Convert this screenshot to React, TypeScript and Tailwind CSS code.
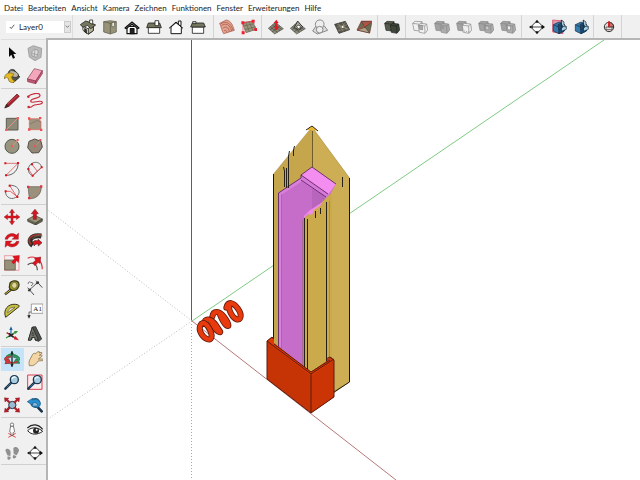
import type { ReactNode } from 'react';

const MENU = [
  'Datei',
  'Bearbeiten',
  'Ansicht',
  'Kamera',
  'Zeichnen',
  'Funktionen',
  'Fenster',
  'Erweiterungen',
  'Hilfe',
];

const RED = '#d9141e';
const STONE = '#8d8b7a';

type Tool = { label: string; icon: ReactNode; active?: boolean };

// All icons are drawn on a 48 unit grid.
function Solids({ tone, variant = 0 }: { tone: string; variant?: number }) {
  const edge = tone === 'dark' ? '#20231f' : '#858585';
  const back = tone === 'dark' ? '#555b4b' : '#a2a2a2';
  const front = tone === 'dark' ? '#3f473b' : '#adadad';
  return (
    <g stroke={edge} strokeWidth="2" strokeLinejoin="round">
      <path
        d="M2 13l7-6 21 1 3 19-8 9-19-2z"
        fill={variant === 1 ? '#f0f0f0' : back}
      />
      <path d="M2 13l22 3 6-8M24 16v19" fill="none" />
      <path
        d="M19 19l6-6 19 2 3 18-8 10-17-3z"
        fill={variant === 1 || variant === 3 ? '#f0f0f0' : front}
      />
      <path d="M19 19l19 2 6-6M38 21l1 21" fill="none" />
      {variant === 1 && <path d="M20 18l11 1 1 13-9-1z" fill="#aaa" />}
      {variant === 2 && <path d="M17 17l12 2 2 12-9-1z" fill="#999" stroke="none" />}
      {variant === 3 && <path d="M24 36l18 3" strokeDasharray="3 3" />}
      {variant === 4 && <path d="M22 21l10 1 1 11-9-1z" fill="#ccc" />}
      {variant === 5 && <path d="M22 20l9 1 1 12-9-1z" fill="#eee" />}
    </g>
  );
}

function Terrain({ fill = STONE, lines = '#30332c' }: { fill?: string; lines?: string }) {
  return (
    <g stroke={lines} strokeWidth="1.5" strokeLinejoin="round">
      <path d="M1 28L22 10l24 19-26 16z" fill={fill} />
      <path d="M7 24l22 16M13 18l23 17M18 14l23 17M6 33l22-18M12 39l23-18" fill="none" />
    </g>
  );
}

const styleCube = (
  <g stroke="#152c43" strokeWidth="2" strokeLinejoin="round">
    <path d="M7 17l17-8 16 8v19l-16 8-17-8z" fill="#3679ad" />
    <path d="M7 17l17 8v19M24 25l16-8" fill="none" />
    <path d="M24 25l16-8v19l-16 8z" fill="#1d5585" />
    <path d="M31 3l8 6v9l7 4v9l-15 6z" fill="#a8cfe2" />
    <path d="M21 17l9-5 6 12-12 8z" fill="#264e70" />
    <path d="M31 3v34M25 20l21 4" fill="none" />
  </g>
);

const sectionPlane = (
  <g fill="none" stroke="#222" strokeWidth="2.5">
    <circle cx="24" cy="24" r="14" fill="#fff" />
    <path d="M3 24h40" />
    <path
      d="M24 2l-6 8h12zM24 46l-6-8h12zM48 24l-9-7v14zM0 24l8-5v10z"
      fill="#111"
      stroke="none"
    />
  </g>
);

const TOP_GROUPS: Tool[][] = [
  [
    {
      label: 'Iso',
      icon: (
        <g stroke="#25271f" strokeWidth="2.5" strokeLinejoin="round">
          <path d="M8 21l17 9 15-11v16L25 46 9 34z" fill="#fff" />
          <path d="M25 28l15-8v15L25 45z" fill="#b8b69d" />
          <path d="M1 17L17 6l13 4 17 8-15 11-9-10L9 25z" fill="#77785f" />
          <path d="M29 3h9v13l-9-4z" fill="#fff" />
          <path d="M14 28v11l6 4V32z" fill="#333" />
        </g>
      ),
    },
    {
      label: 'Oben',
      icon: (
        <g stroke="#55543e" strokeWidth="2">
          <path d="M5 8l20-3 18 3v31l-18 6-20-6z" fill="#96937a" />
          <path d="M25 12v32M5 8l20 5 18-5" fill="none" />
          <path d="M30 11l7-2v13l-7 2z" fill="#fff" />
        </g>
      ),
    },
    {
      label: 'Vorderseite',
      icon: (
        <g stroke="#111" strokeWidth="3.5" strokeLinejoin="round">
          <path d="M9 22h30v22H9z" fill="#fff" />
          <path d="M3 27L24 9l21 18-4 2-17-14L7 29z" fill="#eee" />
          <path d="M19 29h11v15H19z" fill="#222" />
        </g>
      ),
    },
    {
      label: 'Rechts',
      icon: (
        <g stroke="#222" strokeWidth="2.5">
          <path d="M7 25h34v18H7z" fill="#fff" />
          <path d="M7 12h34l5 14H2z" fill="#74735b" />
          <path d="M27 5h11v15H27z" fill="#fff" />
        </g>
      ),
    },
    {
      label: 'Hinten',
      icon: (
        <g stroke="#161616" strokeWidth="3" strokeLinejoin="round">
          <path d="M31 6h8v14h-8z" fill="#fff" />
          <path d="M9 24l15-13 16 13v20H9z" fill="#fff" />
          <path d="M3 28L24 9l21 19" fill="none" />
        </g>
      ),
    },
    {
      label: 'Links',
      icon: (
        <g stroke="#222" strokeWidth="2.5">
          <path d="M7 24h34v19H7z" fill="#fff" />
          <path d="M7 12h34l5 12H2z" fill="#77765e" />
          <path d="M8 8h10v6H8z" fill="#ddd" />
        </g>
      ),
    },
  ],
  [
    {
      label: 'Aus Konturen',
      icon: (
        <g fill="none" stroke="#a24d42" strokeWidth="2">
          <path d="M2 13L22 3c16 3 19 17 24 31L14 44C8 35 6 21 2 13z" fill="#e3a58f" />
          <path d="M7 20c13-9 25-4 31 16M11 28c10-8 18-3 20 10M15 36c5-5 7-2 8 4M5 15C20 4 35 11 42 34" />
        </g>
      ),
    },
    {
      label: 'Neues Terrain',
      icon: (
        <g>
          <path d="M4 11l30-4 12 24-31 10z" fill="#9a957c" stroke="#696552" strokeWidth="2" />
          <path
            d="M14 9l11 29M24 8l12 27M7 21l34-7M11 32l33-9"
            stroke="#696552"
            strokeWidth="2"
          />
          <path d="M6 42V11L38 6" stroke="#ed3741" strokeWidth="2" fill="none" />
          <path d="M1 7h9v9H1zM32 2h9v9h-9zM2 37h9v9H2zM40 27h8v9h-8z" fill="#f01e2f" />
        </g>
      ),
    },
  ],
  [
    {
      label: 'Formen',
      icon: (
        <>
          <Terrain />
          <path d="M25 2l7 10h-4v13h5l-8 9-8-9h5V12h-5z" fill="#e21722" />
        </>
      ),
    },
    {
      label: 'Stempeln',
      icon: (
        <>
          <Terrain />
          <path d="M13 25L23 6l15 18-12 9z" fill="#a7a696" stroke="#222" strokeWidth="2.5" />
          <path d="M19 22l8-4 6 7-8 4z" fill="#fff" stroke="#222" strokeWidth="2" />
        </>
      ),
    },
    {
      label: 'Projizieren',
      icon: (
        <g fill="none" stroke="#777" strokeWidth="2.5">
          <path d="M2 36l10-15h25l10 13-31 11z" fill="#ddd" />
          <path d="M10 16C11-2 37-1 36 16c-1 7-5 7-4 14H14c1-7-4-7-4-14z" fill="#eee" />
          <circle cx="23" cy="32" r="10" fill="#eee" />
        </g>
      ),
    },
    {
      label: 'Detail hinzufügen',
      icon: (
        <>
          <path d="M2 16l32-9 13 25-32 11z" fill="#57564a" stroke="#222" strokeWidth="2" />
          <path
            d="M8 25l32-8M14 36l27-9M13 13l15 25M25 10l14 25M9 39L36 9M10 16l36 16"
            stroke="#a39f84"
            strokeWidth="1.5"
          />
          <circle cx="26" cy="24" r="3" fill="#fff" />
        </>
      ),
    },
    {
      label: 'Kante wenden',
      icon: (
        <g stroke="#6b332b" strokeWidth="2" strokeLinejoin="round">
          <path d="M16 7h32l-7 35-38-9z" fill="#656d53" />
          <path d="M16 7l11 18 21-18z" fill="#a2584c" />
          <path d="M3 33l24-8 14 17z" fill="#a9a58b" />
          <path d="M3 33L48 7" stroke="#e4423d" />
        </g>
      ),
    },
  ],
  [{ label: 'Äußere Schale', icon: <Solids tone="dark" /> }],
  [
    { label: 'Verschneiden', icon: <Solids tone="grey" variant={1} /> },
    { label: 'Vereinen', icon: <Solids tone="grey" variant={2} /> },
    { label: 'Abziehen', icon: <Solids tone="grey" variant={3} /> },
    { label: 'Zuschneiden', icon: <Solids tone="grey" variant={4} /> },
    { label: 'Teilen', icon: <Solids tone="grey" variant={5} /> },
  ],
  [
    { label: 'Schnittebene', icon: sectionPlane },
    {
      label: 'Schnittebenen anzeigen',
      icon: (
        <>
          <path d="M5 3l31 3v38L5 39z" fill="#dc9aad" stroke="#d6546f" strokeWidth="2.5" />
          {styleCube}
        </>
      ),
    },
    { label: 'Schnitte anzeigen', icon: styleCube },
  ],
  [
    {
      label: 'Erweiterung',
      icon: (
        <g stroke="#333" strokeWidth="3">
          <circle cx="24" cy="24" r="14" fill="#e8dedc" />
          <path d="M24 24V10a14 14 0 0114 14z" fill="#d66d68" />
          <path d="M21 7h6v18h-6z" fill="#d32229" stroke="none" />
          <path d="M24 24h-9v8h18v-8" fill="none" strokeWidth="2" />
        </g>
      ),
    },
  ],
];

const GROUP_SPACING = [
  'pl-[4px] pr-[4px]',
  'pl-[2px] pr-[1px]',
  'pl-[3px] pr-[2px]',
  'pl-[3px] pr-[2px]',
  'pl-[3px] pr-[2px]',
  'pl-[4px] pr-[1px]',
  'pl-[4px] pr-[1px]',
];

function magnifier(dark = '#1b354c') {
  return (
    <g>
      <path d="M4 44l18-18" stroke={dark} strokeWidth="7" strokeLinecap="round" />
      <path d="M8 40l12-12" stroke="#2d719d" strokeWidth="3" />
      <circle cx="31" cy="17" r="12" fill="#a8cce0" stroke={dark} strokeWidth="4" />
      <path d="M24 15c2-6 7-7 11-5" stroke="#ecfaff" strokeWidth="4" fill="none" />
    </g>
  );
}

const SIDE_GROUPS: { height: string; tools: Tool[] }[] = [
  {
    height: 'h-[45px]',
    tools: [
      {
        label: 'Auswählen',
        icon: <path d="M15 7v29l7-7 5 12 6-3-5-11h9z" fill="#080808" />,
      },
      {
        label: 'Komponente erstellen',
        icon: (
          <g stroke="#999" strokeWidth="2.5" strokeLinejoin="round">
            <path d="M3 10l16-8 25 8-2 27-18 10-17-11z" fill="#bababa" />
            <path d="M15 20l8-8 11 5-4 20-15-4z" fill="#ddd" />
            <path d="M17 25l14 5M24 13l-2 20" />
          </g>
        ),
      },
      {
        label: 'Farbeimer',
        icon: (
          <g strokeLinejoin="round">
            <path d="M13 18l18-11 16 20-18 16-15-11z" fill="#55564e" stroke="#222" strokeWidth="3" />
            <path d="M13 17C13 0 37 0 35 17" stroke="#222" strokeWidth="2.5" fill="none" />
            <ellipse
              cx="29"
              cy="18"
              rx="15"
              ry="9"
              fill="#bbb89f"
              stroke="#333"
              strokeWidth="2.5"
              transform="rotate(25 29 18)"
            />
            <path
              d="M30 19C18 10 1 15 1 33c6-8 11-6 13 4 3 8 16 9 19 2-7-2-10-7-10-13z"
              fill="#e5ba23"
              stroke="#76601b"
              strokeWidth="2"
            />
          </g>
        ),
      },
      {
        label: 'Radiergummi',
        icon: (
          <g stroke="#873a52" strokeWidth="2" strokeLinejoin="round">
            <path d="M1 33L22 2l24 6-20 31z" fill="#f4a7ba" />
            <path d="M1 33l25 6v8L2 41zM26 39L46 8v9L26 47z" fill="#c65776" />
          </g>
        ),
      },
    ],
  },
  {
    height: 'h-[113px]',
    tools: [
      {
        label: 'Linie',
        icon: (
          <g strokeLinejoin="round">
            <path d="M2 45l6-12L39 3l7 7-31 30z" fill="#a91c28" stroke="#4b1920" strokeWidth="2" />
            <path d="M11 33L41 7" stroke="#ef5b62" strokeWidth="2" />
            <path d="M2 45l6-12 7 7z" fill="#3b2724" />
          </g>
        ),
      },
      {
        label: 'Freihand',
        icon: (
          <g fill="none" stroke="#c92c3c" strokeWidth="3.5" strokeLinecap="round">
            <path d="M3 11C10 3 38-4 39 7 40 17 9 15 11 25c2 9 33-7 35 3 1 8-22 5-28 10-5 5-9 7-14 4" />
            <circle cx="4" cy="11" r="2" />
            <circle cx="5" cy="42" r="2" />
          </g>
        ),
      },
      {
        label: 'Rechteck',
        icon: (
          <g>
            <path d="M7 7h35v35H7z" fill="#8e8a79" stroke="#5c594e" strokeWidth="3" />
            <path d="M9 39L39 9" stroke="#d79a88" strokeWidth="3" />
            <path d="M3 38h7v7H3zM38 3h7v7h-7z" fill="#f36666" />
          </g>
        ),
      },
      {
        label: 'Gedrehtes Rechteck',
        icon: (
          <g>
            <path d="M7 8h28l7 9v24H7z" fill="#a0937f" stroke="#e6605d" strokeWidth="2" />
            <path d="M8 24c17-4 16-16 34-6" stroke="#806b60" strokeWidth="2" fill="none" />
            <path d="M3 4h7v7H3zM36 3h7v7h-7zM3 37h7v7H3zM39 38h7v7h-7z" fill="#ef4e4e" />
          </g>
        ),
      },
      {
        label: 'Kreis',
        icon: (
          <g>
            <circle cx="24" cy="25" r="21" fill="#98947f" stroke="#55574b" strokeWidth="3" />
            <path d="M24 25L39 9" stroke="#dd8e79" strokeWidth="3" />
            <path d="M21 22h6v6h-6zM38 3h6v6h-6z" fill="#ed5b57" />
          </g>
        ),
      },
      {
        label: 'Vieleck',
        icon: (
          <g>
            <path
              d="M6 10l17-7 19 7 4 17-11 17-20 1L2 29z"
              fill="#938878"
              stroke="#555046"
              strokeWidth="3"
            />
            <path d="M24 25L39 9" stroke="#d98975" strokeWidth="2" />
            <path d="M21 22h6v6h-6zM37 3h6v6h-6z" fill="#ed5050" />
          </g>
        ),
      },
      {
        label: 'Bogen',
        icon: (
          <g fill="none" strokeWidth="2.5">
            <path d="M42 6c2 20-14 38-36 37" stroke="#444" />
            <path d="M4 7h38L6 43" stroke="#d55d62" />
            <path d="M1 4h6v6H1zM39 3h6v6h-6zM3 40h6v6H3z" fill={RED} />
          </g>
        ),
      },
      {
        label: '2-Punkt-Bogen',
        icon: (
          <g fill="none" strokeWidth="2.5">
            <path d="M4 26C4 3 38-6 44 19L17 44C9 41 4 35 4 26z" stroke="#555" />
            <path d="M4 24l13 20 27-25M15 10l16 21" stroke="#d64c55" />
            <path d="M1 21h6v6H1zM41 16h6v6h-6zM14 41h6v6h-6zM12 7h6v6h-6z" fill={RED} />
          </g>
        ),
      },
      {
        label: '3-Punkt-Bogen',
        icon: (
          <g fill="none" strokeWidth="2.5">
            <path d="M15 4c24-3 39 17 25 32S5 42 4 23" stroke="#555" />
            <path d="M5 22h14l22 17M17 5l22 34" stroke="#d64c55" />
            <path d="M2 19h6v6H2zM14 2h6v6h-6zM37 36h6v6h-6z" fill={RED} />
          </g>
        ),
      },
      {
        label: 'Kreissegment',
        icon: (
          <g>
            <path d="M3 8h40c0 24-16 37-36 36z" fill="#98917e" stroke="#65584e" strokeWidth="2" />
            <path d="M8 43L42 9" stroke="#c78471" strokeWidth="2" />
            <path d="M0 5h7v7H0zM39 4h7v7h-7zM3 39h7v7H3z" fill="#d93841" />
          </g>
        ),
      },
    ],
  },
  {
    height: 'h-[68px]',
    tools: [
      {
        label: 'Verschieben',
        icon: (
          <path
            d="M24 0l8 11h-5v9h1v1h9v-5l11 8-11 8v-5h-9v1h-1v9h5l-8 11-8-11h5v-9h-1v-1h-9v5L0 24l11-8v5h9v-1h1v-9h-5z"
            fill={RED}
            stroke="#8a252b"
            strokeWidth="1"
          />
        ),
      },
      {
        label: 'Drücken/Ziehen',
        icon: (
          <g stroke="#3e3d30" strokeWidth="2">
            <path d="M2 31l21-12 23 11-20 12z" fill="#969276" />
            <path d="M2 31v6l24 11v-6M26 42l20-12v7L26 48" fill="#626150" />
            <path d="M24 1l10 13h-6v17h-9V14h-6z" fill={RED} stroke="#852129" />
          </g>
        ),
      },
      {
        label: 'Drehen',
        icon: (
          <path
            d="M3 22C5 6 26-1 37 9l7-6-1 19H24l7-7c-8-5-17-1-20 7zM45 28C43 44 22 50 11 40l-8 6 2-19h19l-7 7c8 5 18 1 20-6z"
            fill={RED}
            stroke="#8a1820"
            strokeWidth="1"
          />
        ),
      },
      {
        label: 'Folge mir',
        icon: (
          <g fill="none">
            <path d="M17 40C1 29 10 7 43 12" stroke="#302c29" strokeWidth="15" />
            <path d="M13 37C-1 24 9 5 43 9" stroke="#9b392f" strokeWidth="5" />
            <path d="M17 21C22 11 34 10 46 12" stroke="#696556" strokeWidth="3" />
            <path
              d="M17 31c5-7 10-6 16-4v-5l12 10-11 10v-6c-6-1-11 1-12 6z"
              fill={RED}
              stroke="#52211f"
              strokeWidth="2"
            />
          </g>
        ),
      },
      {
        label: 'Skalieren',
        icon: (
          <g>
            <path d="M1 2h44v44H1z" fill="none" stroke="#e9787c" strokeWidth="2" />
            <path d="M2 15h32v30H2z" fill="#969279" stroke="#555145" strokeWidth="2" />
            <path d="M25 4l22-3-3 23-6-6-9 10-7-7 9-10z" fill={RED} />
          </g>
        ),
      },
      {
        label: 'Versatz',
        icon: (
          <g fill="none" strokeWidth="3.5">
            <path d="M2 10C22-1 45 12 46 43" stroke="#de3340" />
            <path d="M2 29c16-11 29-1 29 17" stroke="#554846" />
            <path d="M17 24l9-8-3-6 18-4-2 19-6-3-9 10z" fill={RED} stroke="#9c1d27" strokeWidth="2" />
          </g>
        ),
      },
    ],
  },
  {
    height: 'h-[68px]',
    tools: [
      {
        label: 'Maßband',
        icon: (
          <g>
            <path d="M3 43l20-16" stroke="#2d2922" strokeWidth="7" />
            <path d="M4 42l20-16" stroke="#d9c52e" strokeWidth="3" />
            <path
              d="M18 9c5-7 18-9 24-3 6 7 2 20-7 24-8 3-18 0-19-8z"
              fill="#a29d25"
              stroke="#3a391c"
              strokeWidth="4"
            />
            <ellipse
              cx="31"
              cy="16"
              rx="8"
              ry="9"
              fill="#ddd69a"
              stroke="#57541d"
              strokeWidth="2"
            />
          </g>
        ),
      },
      {
        label: 'Abmessungen',
        icon: (
          <g stroke="#333" strokeWidth="2.5" fill="none">
            <path d="M7 30L31 8M2 23l19 22M27 2l19 21" />
            <path d="M4 33l7-6M28 11l7-6" strokeWidth="6" />
            <path d="M4 12c-2-6 5-9 8-4M12 8c5-2 8 3 4 6l-4 4" strokeWidth="2" />
          </g>
        ),
      },
      {
        label: 'Winkelmesser',
        icon: (
          <g>
            <path
              d="M5 43C-4 21 12 1 35 4c10 1 12 5 10 7z"
              fill="#c6bf42"
              stroke="#38371f"
              strokeWidth="3"
            />
            <path
              d="M11 29c1-10 9-17 22-16z"
              fill="#eee"
              stroke="#555025"
              strokeWidth="2"
            />
          </g>
        ),
      },
      {
        label: 'Text',
        icon: (
          <g>
            <path d="M13 3h35v28H13z" fill="#fff" stroke="#777" strokeWidth="2" />
            <text x="19" y="24" fontSize="21" fontFamily="Liberation Serif, serif" fill="#111">
              A1
            </text>
            <path d="M13 27H6v13" stroke="#333" strokeWidth="2" fill="none" />
            <path d="M1 37h10l-5 10z" fill="#222" />
          </g>
        ),
      },
      {
        label: 'Achsen',
        icon: (
          <g strokeWidth="4">
            <path d="M21 32V8" stroke="#267dbb" />
            <path d="M16 12l5-11 5 11z" fill="#1762a2" />
            <path d="M6 36l28-17" stroke="#35943b" />
            <path d="M30 15l12 0-7 9z" fill="#35943b" />
            <path d="M8 20l28 17" stroke="#b5222a" />
            <path d="M34 30l11 13-16-3z" fill="#ca2028" />
            <path d="M15 22l13 12M14 32l14-8" stroke="#222" />
          </g>
        ),
      },
      {
        label: '3D-Text',
        icon: (
          <g stroke="#292b29" strokeWidth="2.5" strokeLinejoin="round">
            <path d="M16 3l10-1 18 37-9 7-11-4v-8l-9 1v5L4 43z" fill="#4e524c" />
            <path d="M4 42L16 3l18 38-8 2-3-9-9 1-2 8z" fill="#73766a" />
            <path d="M15 28l2-9 4 8z" fill="#eee" />
          </g>
        ),
      },
    ],
  },
  {
    height: 'h-[68px]',
    tools: [
      {
        label: 'Rotieren',
        active: true,
        icon: (
          <g strokeLinejoin="round">
            <path
              d="M20 13C4 14-4 25 6 31l-3 7 17-1-6-14-4 4c-2-5 3-7 10-8z"
              fill="#d83739"
              stroke="#63322d"
              strokeWidth="2"
            />
            <path
              d="M29 13c17 1 23 10 15 17l3 7-19-1 8-12 4 3c2-5-3-7-11-8z"
              fill="#31a268"
              stroke="#155333"
              strokeWidth="2"
            />
            <path d="M8 16c9-8 24-7 32 0" fill="none" stroke="#299153" strokeWidth="5" />
            <path d="M17 34c8 4 16 2 24-3" fill="none" stroke="#c73230" strokeWidth="5" />
            <path d="M24 1v46" stroke="#172b29" strokeWidth="4" />
            <path d="M24 0l-5 9h10zM24 48l-5-9h10z" fill="#172b29" />
          </g>
        ),
      },
      {
        label: 'Schwenken',
        icon: (
          <path
            d="M7 44c-2-8-1-13 2-19l7-13c3-6 7-7 8-3l9-7c4-2 6 1 3 4l6-2c4 0 4 4 0 5l-5 4 6-1c4 1 3 4-1 6l-8 6 12 0c4 1 4 4 0 5l-13 1c-5 8-9 12-17 14z"
            fill="#f2d7a4"
            stroke="#775f3d"
            strokeWidth="2"
          />
        ),
      },
      { label: 'Zoomen', icon: magnifier() },
      {
        label: 'Zoomfenster',
        icon: (
          <>
            <path d="M2 3h43v43H2z" fill="#faeded" stroke="#dc4150" strokeWidth="3" />
            {magnifier()}
          </>
        ),
      },
      {
        label: 'Alles zoomen',
        icon: (
          <>
            <path d="M18 29l-10 13" stroke="#23394c" strokeWidth="6" />
            <circle cx="25" cy="24" r="11" fill="#9bbbd0" stroke="#263e50" strokeWidth="3" />
            <path
              d="M1 2l14 2-4 3 8 8-4 4-8-8-4 4zM47 2l-14 2 4 3-8 8 4 4 8-8 4 4zM1 46l14-2-4-3 8-8-4-4-8 8-4-4zM47 46l-14-2 4-3-8-8 4-4 8 8 4-4z"
              fill="#ba1e29"
              stroke="#741921"
              strokeWidth="1"
            />
          </>
        ),
      },
      {
        label: 'Vorherige Ansicht',
        icon: (
          <g>
            <path d="M30 28l14 15" stroke="#173249" strokeWidth="8" strokeLinecap="round" />
            <circle cx="25" cy="18" r="13" fill="#86bcdc" stroke="#205d83" strokeWidth="4" />
            <path
              d="M40 17c-4-9-13-12-23-8V4L1 14l16 11v-7c9-3 12-1 15 5-1 5-6 6-12 4 8 9 22 3 20-10z"
              fill="#288fd1"
              stroke="#135482"
              strokeWidth="2"
            />
          </g>
        ),
      },
    ],
  },
  {
    height: 'h-[45px]',
    tools: [
      {
        label: 'Kamera positionieren',
        icon: (
          <g>
            <path d="M13 34l22 12M13 46l22-12" stroke="#e24444" strokeWidth="3" />
            <path
              d="M20 12l-3 17 4 3v8h6v-8l5-3-4-17z"
              fill="#fff"
              stroke="#444"
              strokeWidth="2"
            />
            <circle cx="24" cy="8" r="5" fill="#fff" stroke="#444" strokeWidth="2" />
          </g>
        ),
      },
      {
        label: 'Umsehen',
        icon: (
          <g>
            <path
              d="M2 26C14 13 34 16 47 28c-15 11-34 12-45-2z"
              fill="#fff"
              stroke="#222"
              strokeWidth="3"
            />
            <path d="M1 18C16 4 34 6 47 22" stroke="#222" strokeWidth="4" fill="none" />
            <circle cx="27" cy="26" r="9" fill="#222" />
            <circle cx="29" cy="23" r="3" fill="#fff" />
          </g>
        ),
      },
      {
        label: 'Gehen',
        icon: (
          <g fill="#909090">
            <path d="M4 16c4-9 15-4 16 6l-1 12-9-3zM11 34l9 2c1 9-8 11-10 5z" />
            <path d="M28 10c5-9 18-3 17 8l-7 13-9-4zM28 30l9 3c-1 10-11 9-11 2z" />
          </g>
        ),
      },
      { label: 'Schnittebene setzen', icon: sectionPlane },
    ],
  },
];

function ToolButton({ tool }: { tool: Tool }) {
  return (
    <button
      aria-label={tool.label}
      className={
        tool.active
          ? 'flex items-center justify-center bg-[#c5e4fa]'
          : 'flex items-center justify-center hover:bg-[#e0eefa]'
      }
    >
      <svg viewBox="0 0 48 48" className="size-4">
        {tool.icon}
      </svg>
    </button>
  );
}

const COILS = [
  'M103 35C108 15 124 18 138 38S146 74 134 70 108 42 112 28',
  'M61 62C64 42 82 44 97 64S112 95 103 88 88 66 84 56',
  'M35 84C40 63 58 68 72 88S89 112 79 107 62 86 57 77',
  'M25 88C32 72 47 86 55 104S58 134 45 129 18 104 25 88',
];

function Spring() {
  return (
    <g transform="translate(192 296) scale(0.3333)" fill="none" strokeLinecap="round">
      {COILS.map((d) => (
        <g key={d}>
          <path d={d} stroke="#611a0b" strokeWidth="18" />
          <path d={d} stroke="#e83a0c" strokeWidth="13" />
        </g>
      ))}
    </g>
  );
}

function Viewport() {
  return (
    <svg
      viewBox="48 40 592 440"
      preserveAspectRatio="xMinYMin slice"
      className="block h-full w-full"
      role="img"
      aria-label="Modell"
    >
      {/* axes */}
      <path d="M191.500 40V321" stroke="#5c5c78" />
      <path d="M191.500 321V480" stroke="#aaa" strokeDasharray="1 2" />
      <path d="M192 321L604 40" stroke="#7fcb83" />
      <path d="M192 321L48 419" stroke="#bbb" strokeDasharray="1 2" />
      <path d="M192 321L396 480" stroke="#b67878" />
      <path d="M192 321L48 210" stroke="#bbb" strokeDasharray="1 2" />

      {/* wooden body */}
      <path d="M273.500 174L312 127l37.500 51v204L334 393l-24-20-36.500-30z" fill="#c6a64c" />
      <path d="M312 127l37.500 51v204L334 393h-22z" fill="#cdae55" />
      <path d="M273.500 174V345M349.500 178V382L334 392" stroke="#171711" fill="none" />
      <path d="M273.500 174L312 127l37.500 51" stroke="#a78d49" strokeWidth="0.5" fill="none" />
      <path d="M307 130l5-4 6 5-4-1h-4z" fill="#edb52a" />
      <path d="M306 130l6-4 6 5" fill="none" stroke="#292417" />
      <path d="M312.500 131v37" stroke="#6e5c2a" />

      {/* inner slot */}
      <path d="M278 193l23-15 11-11 24 17-8 14-18 14 4 1-10 6v148l-26-21z" fill="#c66dca" />
      <path d="M312 187l14 10-3 5-11 7z" fill="#b865bd" />
      <path d="M301 175l11-8 24 17-8 11z" fill="#f48df0" />
      <path d="M301 175l27 19-1 4-26-17z" fill="#d778dc" />
      <path d="M278 193l23-15v4l-20 13v152l-3-2z" fill="#da80dc" />
      <path
        d="M278.500 347V193L301 178v-3l11-8 24 17M301 175l27 19M301 180l25 17"
        stroke="#4b204e"
        strokeWidth="0.8"
        fill="none"
      />
      <path d="M304 218l6-5-1-2 9-5 10-10 4-2v178l-21 1-7-6z" fill="#cbaa4c" />
      <path d="M309 211l9-6 5-3-3 4-6 4-2 5-4-1-4 4v-2z" fill="#f08bea" />
      <path
        d="M284.500 187v-16l-1-4M288.500 188v-32l1-5M286.500 188v-20M293.500 156v-6l1-4M304.500 218V369M307.500 219V371M315.500 211v7M320.500 208v6M326.500 202V366M342.500 177v10"
        stroke="#26221a"
        fill="none"
      />
      <path d="M281.500 194V350M302.500 220V367M329.500 201V363" stroke="#8b6e5c" strokeWidth="0.5" />

      {/* red base */}
      <path d="M267 341l5-4 2 1v6l37 28 16-11v-2l4-2 3 3v37l-23 16-44-34z" fill="#c63405" />
      <path d="M311 374l23-15v38l-23 16z" fill="#cb3505" />
      <path d="M267 341l4-3 3 2v3l37 29 19-13 4 1-23 16z" fill="#df3a08" />
      <path
        d="M267 341l5-4 2 2M267 341v38l44 34 23-16v-37l-4-3-4 2M267 341l44 33v39M274 344l37 28 19-12M311 374l23-15"
        stroke="#5c1b0c"
        fill="none"
      />
      <Spring />
    </svg>
  );
}

export default function App() {
  return (
    <div className="flex h-screen flex-col overflow-hidden bg-[#f0f0f0] font-['Lato','Noto_Sans',sans-serif] text-[8px] text-[#222]">
      <nav className="flex h-[15px] shrink-0 items-center gap-[5px] bg-white px-1">
        {MENU.map((item) => (
          <button key={item} className="whitespace-nowrap">
            {item}
          </button>
        ))}
      </nav>

      <header className="flex h-[23px] shrink-0 items-stretch">
        <div className="flex w-[73px] shrink-0 items-center border-r border-[#ddd] pl-[6px]">
          <label className="relative flex h-3 w-[65px] items-center bg-white pl-[3px]">
            <svg viewBox="0 0 8 8" className="size-[6px]">
              <path d="M1 4l2 2 4-5" fill="none" stroke="#222" />
            </svg>
            <select
              aria-label="Layer"
              className="h-3 flex-1 appearance-none bg-transparent pl-1 outline-none"
            >
              <option>Layer0</option>
            </select>
            <span className="pointer-events-none absolute right-0 flex h-3 w-[7px] items-center justify-center border border-[#ccc] bg-[#e5e5e5]">
              <svg viewBox="0 0 6 6" className="size-[5px]">
                <path d="M1 2l2 2 2-2" fill="none" stroke="#666" />
              </svg>
            </span>
          </label>
        </div>
        {TOP_GROUPS.map((group, i) => (
          <div key={i} className={`flex border-r border-[#d4d4d4] ${GROUP_SPACING[i]}`}>
            {group.map((tool) => (
              <div key={tool.label} className="grid w-[22px]">
                <ToolButton tool={tool} />
              </div>
            ))}
          </div>
        ))}
      </header>

      <div className="flex min-h-0 flex-1">
        <aside className="w-[46px] shrink-0 pt-px pl-px">
          <div className="mb-[2px] h-px bg-[#ddd]" />
          {SIDE_GROUPS.map(({ height, tools }, i) => (
            <div key={i}>
              {i > 0 && <div className="my-px h-px bg-[#d0d0d0]" />}
              <div className={`grid auto-rows-fr grid-cols-2 ${height}`}>
                {tools.map((tool) => (
                  <ToolButton key={tool.label} tool={tool} />
                ))}
              </div>
            </div>
          ))}
          <div className="h-px bg-[#d0d0d0]" />
        </aside>
        <main className="min-w-0 flex-1 border-t-2 border-l-2 border-[#b5b5b5] bg-white">
          <Viewport />
        </main>
      </div>
    </div>
  );
}
